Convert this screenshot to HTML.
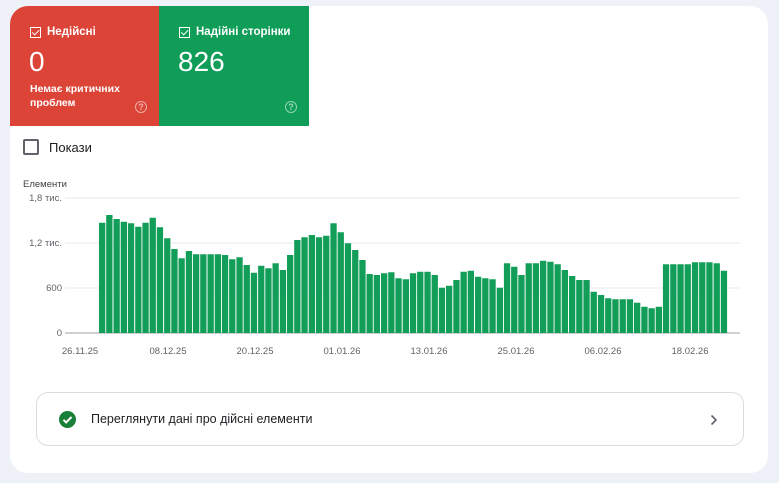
<!DOCTYPE html>
<html><head><meta charset="utf-8"><style>
body{margin:0;width:779px;height:483px;background:#eef2f8;font-family:"Liberation Sans",Arial,sans-serif;position:relative;overflow:hidden}
.card{position:absolute;left:10px;top:6px;width:758px;height:467px;background:#fff;border-radius:18px;overflow:hidden}
.tile{position:absolute;top:0;height:120px;color:#fff}
.red{left:0;width:149px;background:#db4437}
.green{left:149px;width:150px;background:#0f9d58}
.lab{position:absolute;left:20px;top:20px;font-size:11.5px;font-weight:bold;display:flex;align-items:center}
.cb{width:9px;height:9px;border:1.2px solid #fff;margin-right:6px;position:relative}
.cb:after{content:"";position:absolute;left:2.5px;top:0px;width:2.5px;height:5.5px;border:solid #fff;border-width:0 1.3px 1.3px 0;transform:rotate(45deg)}
.num{position:absolute;left:19px;top:40px;font-size:28px}
.sub{position:absolute;left:20px;top:76px;font-size:10.5px;font-weight:bold;line-height:14px}
.q{position:absolute;top:95px;width:10px;height:10px;border:1.3px solid rgba(255,255,255,.55);border-radius:50%;font-size:9px;font-weight:bold;color:rgba(255,255,255,.6);text-align:center;line-height:10px}
.show{position:absolute;left:13px;top:133px;display:flex;align-items:center;font-size:13px;color:#202124}
.show .box{width:12px;height:12px;border:2px solid #5f6368;border-radius:2px;margin-right:10px}
.btn{position:absolute;left:26px;top:386px;width:706px;height:52px;border:1px solid #dadce0;border-radius:12px}
.btn .ck{position:absolute;left:22px;top:18px;width:17px;height:17px;border-radius:50%;background:#188038}
.btn .t{position:absolute;left:54px;top:19px;font-size:12.5px;color:#202124}
</style></head><body>
<div class="card">
 <div class="tile red"><div class="lab"><span class="cb"></span>Недійсні</div><div class="num">0</div><div class="sub">Немає критичних<br>проблем</div><div class="q" style="left:125px">?</div></div>
 <div class="tile green"><div class="lab"><span class="cb"></span>Надійні сторінки</div><div class="num">826</div><div class="q" style="left:126px">?</div></div>
 <div class="show"><span class="box"></span>Покази</div>
 <div class="btn"><div class="ck"><svg width="17" height="17"><path d="M4.5 8.8l2.6 2.6 5.4-5.4" stroke="#fff" stroke-width="2" fill="none"/></svg></div><div class="t">Переглянути дані про дійсні елементи</div>
 <svg style="position:absolute;left:672px;top:21px" width="10" height="12"><path d="M2.5 1.5l4.5 4.5-4.5 4.5" stroke="#5f6368" stroke-width="1.6" fill="none"/></svg></div>
</div>
<svg style="position:absolute;left:0;top:0" width="779" height="483" font-family="Liberation Sans, Arial, sans-serif">
 <text x="23" y="187" font-size="9.5" fill="#3c4043">Елементи</text>
 <g stroke="#e8eaed" stroke-width="1"><line x1="65" x2="740" y1="198" y2="198"/><line x1="65" x2="740" y1="243" y2="243"/><line x1="65" x2="740" y1="288" y2="288"/></g>
 <line x1="65" x2="740" y1="333" y2="333" stroke="#9aa0a6"/>
 <g font-size="9.5" fill="#5f6368" text-anchor="end"><text x="62" y="201">1,8 тис.</text><text x="62" y="246">1,2 тис.</text><text x="62" y="291">600</text><text x="62" y="336">0</text></g>
 <g font-size="9.5" fill="#5f6368" text-anchor="middle"><text x="80" y="354">26.11.25</text><text x="168" y="354">08.12.25</text><text x="255" y="354">20.12.25</text><text x="342" y="354">01.01.26</text><text x="429" y="354">13.01.26</text><text x="516" y="354">25.01.26</text><text x="603" y="354">06.02.26</text><text x="690" y="354">18.02.26</text></g>
 <path fill="#129e58" d="M99 222.7h6.3V333h-6.3zM106.2 215h6.3V333h-6.3zM113.5 219h6.3V333h-6.3zM120.7 221.7h6.3V333h-6.3zM127.9 223.3h6.3V333h-6.3zM135.2 226.7h6.3V333h-6.3zM142.4 222.7h6.3V333h-6.3zM149.6 217.7h6.3V333h-6.3zM156.8 227.3h6.3V333h-6.3zM164.1 238.3h6.3V333h-6.3zM171.3 249h6.3V333h-6.3zM178.5 258.3h6.3V333h-6.3zM185.8 251h6.3V333h-6.3zM193 254.3h6.3V333h-6.3zM200.2 254.3h6.3V333h-6.3zM207.5 254.3h6.3V333h-6.3zM214.7 254.3h6.3V333h-6.3zM221.9 255h6.3V333h-6.3zM229.1 259.3h6.3V333h-6.3zM236.4 257.3h6.3V333h-6.3zM243.6 265h6.3V333h-6.3zM250.8 272.7h6.3V333h-6.3zM258.1 265.7h6.3V333h-6.3zM265.3 268.3h6.3V333h-6.3zM272.5 263.3h6.3V333h-6.3zM279.8 270h6.3V333h-6.3zM287 255h6.3V333h-6.3zM294.2 240h6.3V333h-6.3zM301.4 237.3h6.3V333h-6.3zM308.7 235h6.3V333h-6.3zM315.9 237.3h6.3V333h-6.3zM323.1 235.7h6.3V333h-6.3zM330.4 223.3h6.3V333h-6.3zM337.6 232.3h6.3V333h-6.3zM344.8 243.3h6.3V333h-6.3zM352.1 250h6.3V333h-6.3zM359.3 260h6.3V333h-6.3zM366.5 274h6.3V333h-6.3zM373.7 275h6.3V333h-6.3zM381 273.3h6.3V333h-6.3zM388.2 272.3h6.3V333h-6.3zM395.4 278.3h6.3V333h-6.3zM402.7 279.3h6.3V333h-6.3zM409.9 273.3h6.3V333h-6.3zM417.1 271.7h6.3V333h-6.3zM424.4 271.7h6.3V333h-6.3zM431.6 275h6.3V333h-6.3zM438.8 287.7h6.3V333h-6.3zM446 285.7h6.3V333h-6.3zM453.3 280h6.3V333h-6.3zM460.5 271.7h6.3V333h-6.3zM467.7 270.7h6.3V333h-6.3zM475 276.7h6.3V333h-6.3zM482.2 278.3h6.3V333h-6.3zM489.4 279.3h6.3V333h-6.3zM496.7 287.7h6.3V333h-6.3zM503.9 263.3h6.3V333h-6.3zM511.1 266.7h6.3V333h-6.3zM518.3 275h6.3V333h-6.3zM525.6 263.3h6.3V333h-6.3zM532.8 263.3h6.3V333h-6.3zM540 260.7h6.3V333h-6.3zM547.3 261.7h6.3V333h-6.3zM554.5 264.3h6.3V333h-6.3zM561.7 270h6.3V333h-6.3zM569 276h6.3V333h-6.3zM576.2 280h6.3V333h-6.3zM583.4 280h6.3V333h-6.3zM590.6 291.7h6.3V333h-6.3zM597.9 295h6.3V333h-6.3zM605.1 298.3h6.3V333h-6.3zM612.3 299.3h6.3V333h-6.3zM619.6 299.3h6.3V333h-6.3zM626.8 299.3h6.3V333h-6.3zM634 302.7h6.3V333h-6.3zM641.3 306.7h6.3V333h-6.3zM648.5 308.3h6.3V333h-6.3zM655.7 306.7h6.3V333h-6.3zM662.9 264.3h6.3V333h-6.3zM670.2 264.3h6.3V333h-6.3zM677.4 264.3h6.3V333h-6.3zM684.6 264.3h6.3V333h-6.3zM691.9 262.3h6.3V333h-6.3zM699.1 262.3h6.3V333h-6.3zM706.3 262.3h6.3V333h-6.3zM713.6 263.3h6.3V333h-6.3zM720.8 270.7h6.3V333h-6.3z"/>
</svg>
</body></html>
